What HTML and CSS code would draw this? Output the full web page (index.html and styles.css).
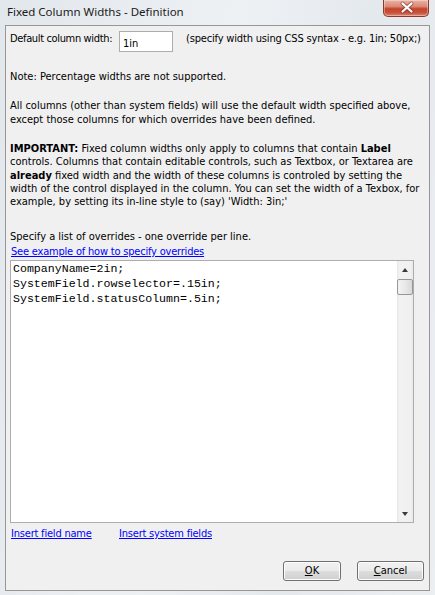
FILE: index.html
```html
<!DOCTYPE html>
<html>
<head>
<meta charset="utf-8">
<link rel="stylesheet" href="styles.css">
</head>
<body>
<div class="window">
  <div class="titlebar">
    <span class="title">Fixed Column Widths - Definition</span>
    <div class="close">
      <svg width="46" height="16" viewBox="0 0 46 16">
        <path d="M18.5 3.5 L27.5 11.5 M27.5 3.5 L18.5 11.5" stroke="#6b2c22" stroke-width="4" stroke-linecap="round" fill="none" opacity="0.55"/>
        <path d="M18.5 3.5 L27.5 11.5 M27.5 3.5 L18.5 11.5" stroke="#ffffff" stroke-width="2.2" stroke-linecap="round" fill="none"/>
      </svg>
    </div>
  </div>
  <div class="frame">
    <div class="row1">
      <span class="lbl">Default column width:</span>
      <div class="input">1in</div>
      <span class="hint">(specify width using CSS syntax - e.g. 1in; 50px;)</span>
    </div>
    <p class="txt note">Note: Percentage widths are not supported.</p>
    <p class="txt all">All columns (other than system fields) will use the default width specified above,<br>except those columns for which overrides have been defined.</p>
    <p class="txt imp"><b>IMPORTANT:</b> Fixed column widths only apply to columns that contain <b>Label</b><br>controls. Columns that contain editable controls, such as Textbox, or Textarea are<br><b>already</b> fixed width and the width of these columns is controled by setting the<br>width of the control displayed in the column. You can set the width of a Texbox, for<br>example, by setting its in-line style to (say) 'Width: 3in;'</p>
    <p class="txt spec">Specify a list of overrides - one override per line.</p>
    <a class="link see" href="#">See example of how to specify overrides</a>
    <div class="editor">
      <div class="code">CompanyName=2in;
SystemField.rowselector=.15in;
SystemField.statusColumn=.5in;</div>
      <div class="scroll">
        <div class="sbtn"><span class="arr up"></span></div>
        <div class="thumb"></div>
        <div class="track"></div>
        <div class="sbtn"><span class="arr down"></span></div>
      </div>
    </div>
    <div class="links">
      <a class="link" href="#">Insert field name</a>
      <a class="link" href="#">Insert system fields</a>
    </div>
    <div class="buttons">
      <button class="btn ok"><u>O</u>K</button>
      <button class="btn cancel"><u>C</u>ancel</button>
    </div>
  </div>
</div>
</body>
</html>
```
FILE: styles.css
```css
* { box-sizing: border-box; }
html, body { margin: 0; padding: 0; }
body {
  width: 435px;
  height: 595px;
  overflow: hidden;
  background: linear-gradient(100deg, #e2e7ec 0%, #eef1f4 45%, #e4e9ee 70%, #eceff2 100%);
  font-family: "DejaVu Sans Condensed", "Liberation Sans", sans-serif;
  font-size: 11px;
  color: #000;
}
.window { width: 435px; height: 595px; }
.titlebar {
  height: 25px;
  display: flex;
  justify-content: space-between;
  align-items: flex-start;
}
.title {
  font-family: "Noto Sans", "Open Sans", sans-serif;
  font-size: 11.5px;
  color: #1b1b1b;
  padding: 4px 0 0 7px;
  line-height: 16px;
}
.close {
  width: 46px;
  height: 17px;
  margin-right: 6px;
  border: 1px solid #8a3a2c;
  border-top: none;
  border-radius: 0 0 5px 5px;
  background: linear-gradient(#eab2a4 0%, #dc8a78 40%, #c4432c 55%, #c9523a 80%, #dc8a74 100%);
  box-shadow: inset 0 0 0 1px rgba(255,255,255,0.35);
}
.close svg { display: block; }
.frame {
  margin: 0 5px;
  height: 566px;
  border: 1px solid #979797;
  background: #f0f0f0;
  padding: 0 4px;
}
.row1 {
  display: flex;
  align-items: flex-start;
  margin-top: 5px;
  height: 21px;
}
.lbl {
  width: 109px;
  flex-shrink: 0;
  line-height: 14px;
  margin-top: 1px;
  white-space: nowrap;
  letter-spacing: -0.35px;
}
.input {
  width: 54px;
  flex-shrink: 0;
  height: 21px;
  border: 1px solid #abadb3;
  background: #fff;
  padding: 6px 0 0 3px;
  line-height: 12px;
}
.hint {
  margin-left: 13px;
  flex-shrink: 0;
  line-height: 14px;
  margin-top: 1px;
  white-space: nowrap;
  letter-spacing: -0.17px;
}
.txt { margin: 0; line-height: 14px; white-space: nowrap; }
.note { margin-top: 18px; }
.all { margin-top: 15px; }
.imp { margin-top: 15px; line-height: 13.3px; }
.imp b { font-weight: bold; }
.spec { margin-top: 22px; }
.link {
  color: #0000ff;
  text-decoration: underline;
  line-height: 14px;
  white-space: nowrap;
  letter-spacing: -0.2px;
}
.see { display: block; margin-left: 1px; margin-top: 1px; }
.editor {
  margin-top: 1px;
  width: 404px;
  height: 263px;
  border: 1px solid #abadb3;
  background: #fff;
  display: flex;
}
.code {
  flex: 1;
  white-space: pre;
  font-family: "Liberation Mono", monospace;
  font-size: 11.6px;
  line-height: 15px;
  padding: 0 0 0 2px;
  color: #000;
}
.scroll {
  width: 16px;
  display: flex;
  flex-direction: column;
  background: linear-gradient(90deg, #e6e6e6 0%, #f2f2f2 15%, #f0f0f0 85%, #e9e9e9 100%);
}
.sbtn {
  height: 17px;
  display: flex;
  align-items: center;
  justify-content: center;
}
.arr { width: 0; height: 0; border-left: 3.5px solid transparent; border-right: 3.5px solid transparent; }
.arr.up { border-bottom: 4px solid #3a3a3a; margin-top: 1px; }
.arr.down { border-top: 4px solid #3a3a3a; }
.thumb {
  height: 16px;
  margin-top: 1px;
  border: 1px solid #969696;
  border-radius: 2px;
  background: linear-gradient(90deg, #f4f4f4 0%, #e8e8e8 50%, #d9d9d9 100%);
}
.track { flex: 1; }
.links {
  margin-top: 4px;
  display: grid;
  grid-template-columns: 108px auto;
  padding-left: 1px;
}
.buttons {
  margin-top: 20px;
  display: flex;
  justify-content: flex-end;
  gap: 16px;
  padding-right: 1px;
}
.btn {
  height: 20px;
  border: 1px solid #707070;
  border-radius: 3px;
  background: linear-gradient(#f2f2f2 0%, #ebebeb 48%, #dddddd 52%, #cfcfcf 100%);
  box-shadow: inset 0 0 0 1px #fcfcfc;
  font-family: "DejaVu Sans Condensed", "Liberation Sans", sans-serif;
  font-size: 11px;
  color: #000;
  padding: 0;
  line-height: 16px;
}
.ok { width: 58px; }
.cancel { width: 67px; }
```
